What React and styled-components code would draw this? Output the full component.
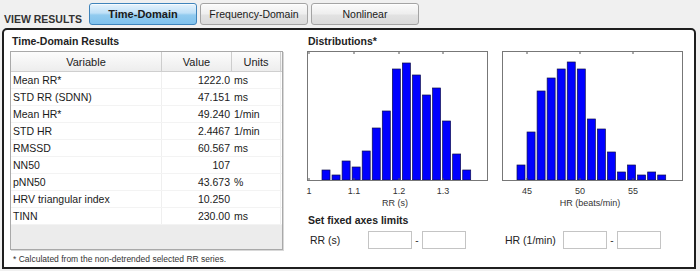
import React from 'react';
import styled, { createGlobalStyle } from 'styled-components';

const GlobalStyle = createGlobalStyle`
  html, body {
    margin: 0;
    padding: 0;
    background: #f0f0f0;
  }
  body {
    font-family: "Liberation Sans", Arial, sans-serif;
    color: #111;
  }
`;

const rows = [
  { name: 'Mean RR*', value: '1222.0', unit: 'ms' },
  { name: 'STD RR (SDNN)', value: '47.151', unit: 'ms' },
  { name: 'Mean HR*', value: '49.240', unit: '1/min' },
  { name: 'STD HR', value: '2.4467', unit: '1/min' },
  { name: 'RMSSD', value: '60.567', unit: 'ms' },
  { name: 'NN50', value: '107', unit: '' },
  { name: 'pNN50', value: '43.673', unit: '%' },
  { name: 'HRV triangular index', value: '10.250', unit: '' },
  { name: 'TINN', value: '230.00', unit: 'ms' },
];

const rrBars = [119, 124, 110, 116, 100, 77, 60, 18, 12, 24, 44, 37, 70, 103, 119];
const hrBars = [114, 81, 40, 27, 18, 11, 18, 68, 78, 101, 121, 114, 124, 121, 124];

const rrTicks = [
  { x: 2, label: '1' },
  { x: 47, label: '1.1' },
  { x: 92, label: '1.2' },
  { x: 136, label: '1.3' },
];
const hrTicks = [
  { x: 25, label: '45' },
  { x: 78, label: '50' },
  { x: 131, label: '55' },
];

const Page = styled.div`
  width: 700px;
  height: 271px;
  overflow: hidden;
`;

const TopBar = styled.div`
  display: flex;
  align-items: flex-start;
  height: 25px;
  padding: 3px 0 0 4px;
`;

const ViewTitle = styled.div`
  margin-top: 9px;
  width: 85px;
  font-size: 10.5px;
  line-height: 14px;
  font-weight: bold;
  color: #333;
`;

const Tabs = styled.div`
  display: flex;
  gap: 3px;
`;

const Tab = styled.div`
  width: 108px;
  height: 22px;
  box-sizing: border-box;
  display: flex;
  align-items: center;
  justify-content: center;
  border-radius: 3px;
  font-size: ${p => (p.$active ? '11px' : '10.5px')};
  font-weight: ${p => (p.$active ? 'bold' : 'normal')};
  color: #1a1a1a;
  border: 1px solid ${p => (p.$active ? '#3f84bb' : '#a4a4a4')};
  background: ${p =>
    p.$active
      ? 'linear-gradient(#e6f3fc 0%, #bfe0f7 45%, #92cbef 55%, #7fc1ec 100%)'
      : 'linear-gradient(#fbfbfb 0%, #eeeeee 50%, #e2e2e2 55%, #dadada 100%)'};
  box-shadow: inset 0 1px 0 rgba(255, 255, 255, 0.7);
`;

const Panel = styled.div`
  margin-left: 2px;
  width: 694px;
  height: 241px;
  box-sizing: border-box;
  border: 2px solid #1e1e1e;
  border-radius: 5px 5px 0 0;
  background: #fff;
  padding: 4px 0 0 6px;
  display: grid;
  grid-template-columns: 273px 376px;
  column-gap: 24px;
  align-items: start;
`;

const Column = styled.div`
  display: flex;
  flex-direction: column;
`;

const SectionTitle = styled.div`
  font-size: 10.5px;
  line-height: 14px;
  font-weight: bold;
  color: #222;
  padding-left: ${p => p.$indent || 0}px;
  margin-bottom: 3px;
  margin-top: ${p => p.$top || 0}px;
`;

const Table = styled.div`
  height: 199px;
  box-sizing: border-box;
  border: 1px solid #a9a9a9;
  background: #ececec;
  box-shadow: 1px 1px 0 #d8d8d8;
`;

const HeaderRow = styled.div`
  display: grid;
  grid-template-columns: 151px 70px 49px 1fr;
  height: 20px;
  box-sizing: border-box;
  border-bottom: 1px solid #cfcfcf;
  background: linear-gradient(#fcfcfc, #ededed);
`;

const HeaderCell = styled.div`
  display: flex;
  align-items: center;
  justify-content: center;
  font-size: 11px;
  color: #222;
  border-right: 1px solid #cdcdcd;
  &:last-child {
    border-right: none;
  }
`;

const Row = styled.div`
  display: grid;
  grid-template-columns: 151px 70px 49px 1fr;
  height: 17px;
  box-sizing: border-box;
  background: #fff;
  border-bottom: 1px solid #f3f3f3;
`;

const Cell = styled.div`
  display: flex;
  align-items: center;
  font-size: 10.5px;
  color: #1a1a1a;
  white-space: nowrap;
  padding: ${p => (p.$align === 'right' ? '0 2px 0 0' : '0 0 0 2px')};
  justify-content: ${p => (p.$align === 'right' ? 'flex-end' : 'flex-start')};
  border-right: ${p => (p.$divider ? '1px solid #efefef' : 'none')};
`;

const Footnote = styled.div`
  margin-top: 3px;
  padding-left: 3px;
  font-size: 8.5px;
  line-height: 12px;
  color: #333;
`;

const Plots = styled.div`
  display: grid;
  grid-template-columns: 181px 181px;
  column-gap: 14px;
`;

const PlotSvg = styled.svg`
  display: block;
  overflow: visible;
  font-family: "Liberation Sans", Arial, sans-serif;
`;

const LimitsRow = styled.div`
  display: grid;
  grid-template-columns: 181px 181px;
  column-gap: 14px;
  margin-top: 1px;
`;

const LimitGroup = styled.div`
  display: flex;
  align-items: center;
  height: 18px;
`;

const LimitLabel = styled.div`
  width: 58px;
  padding-left: 3px;
  font-size: 10.5px;
  color: #222;
`;

const LimitInput = styled.input`
  width: 44px;
  height: 18px;
  box-sizing: border-box;
  margin: 0;
  border: 1px solid #c4c4c4;
  background: #fff;
  outline: none;
`;

const Dash = styled.span`
  width: 10px;
  text-align: center;
  font-size: 10px;
  color: #333;
`;

const Histogram = ({ bars, ticks, label }) => (
  <PlotSvg width="181" height="160" viewBox="0 0 181 160">
    {bars.map((top, i) => (
      <rect
        key={i}
        x={15 + i * 10.05}
        y={top}
        width="8"
        height={129 - top}
        fill="#0000ff"
        stroke="#10104a"
        strokeWidth="0.7"
      />
    ))}
    <rect x="0.5" y="0.5" width="180" height="129" fill="none" stroke="#777" strokeWidth="1" />
    {ticks.map(t => (
      <g key={t.label}>
        <line x1={t.x} y1="1" x2={t.x} y2="3" stroke="#555" />
        <line x1={t.x} y1="127" x2={t.x} y2="129" stroke="#555" />
        <text x={t.x} y="143" fontSize="9" textAnchor="middle" fill="#333">
          {t.label}
        </text>
      </g>
    ))}
    <text x="88" y="155" fontSize="9" textAnchor="middle" fill="#333">
      {label}
    </text>
  </PlotSvg>
);

const App = () => (
  <Page>
    <GlobalStyle />
    <TopBar>
      <ViewTitle>VIEW RESULTS</ViewTitle>
      <Tabs>
        <Tab $active>Time-Domain</Tab>
        <Tab>Frequency-Domain</Tab>
        <Tab>Nonlinear</Tab>
      </Tabs>
    </TopBar>
    <Panel>
      <Column>
        <SectionTitle $indent={2}>Time-Domain Results</SectionTitle>
        <Table>
          <HeaderRow>
            <HeaderCell>Variable</HeaderCell>
            <HeaderCell>Value</HeaderCell>
            <HeaderCell>Units</HeaderCell>
            <HeaderCell />
          </HeaderRow>
          {rows.map(r => (
            <Row key={r.name}>
              <Cell $divider>{r.name}</Cell>
              <Cell $align="right">{r.value}</Cell>
              <Cell $divider>{r.unit}</Cell>
              <Cell />
            </Row>
          ))}
        </Table>
        <Footnote>* Calculated from the non-detrended selected RR series.</Footnote>
      </Column>
      <Column>
        <SectionTitle $indent={1}>Distributions*</SectionTitle>
        <Plots>
          <Histogram bars={rrBars} ticks={rrTicks} label="RR (s)" />
          <Histogram bars={hrBars} ticks={hrTicks} label="HR (beats/min)" />
        </Plots>
        <SectionTitle $indent={1} $top={2}>Set fixed axes limits</SectionTitle>
        <LimitsRow>
          <LimitGroup>
            <LimitLabel>RR (s)</LimitLabel>
            <LimitInput />
            <Dash>-</Dash>
            <LimitInput />
          </LimitGroup>
          <LimitGroup>
            <LimitLabel>HR (1/min)</LimitLabel>
            <LimitInput />
            <Dash>-</Dash>
            <LimitInput />
          </LimitGroup>
        </LimitsRow>
      </Column>
    </Panel>
  </Page>
);

export default App;
